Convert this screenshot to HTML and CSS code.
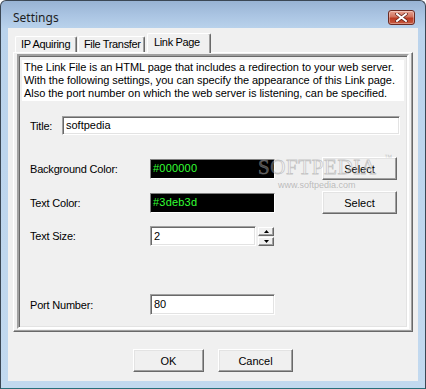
FILE: index.html
```html
<!DOCTYPE html>
<html>
<head>
<meta charset="utf-8">
<link rel="stylesheet" href="styles.css">
</head>
<body>
<div class="window">
  <div class="titlebar">
    <span class="title">Settings</span>
    <div class="close"><svg width="13" height="9" viewBox="0 0 13 9"><path d="M2 1 L11 8 M11 1 L2 8" stroke="#5a1a12" stroke-width="3.4" stroke-linecap="square"/><path d="M2 1 L11 8 M11 1 L2 8" stroke="#ffffff" stroke-width="2" stroke-linecap="square"/></svg></div>
  </div>
  <div class="client">
    <div class="tabctl">
      <div class="tabs">
        <div class="tab">IP Aquiring</div>
        <div class="tab">File Transfer</div>
        <div class="tab active">Link Page</div>
      </div>
      <div class="panel">
        <div class="frame">
          <div class="desc">The Link File is an HTML page that includes a redirection to your web server.<br>With the following settings, you can specify the appearance of this Link page.<br>Also the port number on which the web server is listening, can be specified.</div>
          <div class="row row-title">
            <span class="label lbl-title">Title:</span>
            <div class="field title-field">softpedia</div>
          </div>
          <div class="row row-bg">
            <span class="label">Background Color:</span>
            <div class="colorbox">#000000</div>
            <div class="btn select">Select</div>
          </div>
          <div class="row row-tc">
            <span class="label">Text Color:</span>
            <div class="colorbox">#3deb3d</div>
            <div class="btn select">Select</div>
          </div>
          <div class="row row-size">
            <span class="label">Text Size:</span>
            <div class="field size-field">2</div>
            <div class="spin">
              <div class="spinbtn"><svg width="5" height="3" viewBox="0 0 5 3"><path d="M2.5 0 L5 3 L0 3 Z" fill="#000"/></svg></div>
              <div class="spinbtn"><svg width="5" height="3" viewBox="0 0 5 3"><path d="M0 0 L5 0 L2.5 3 Z" fill="#000"/></svg></div>
            </div>
          </div>
          <div class="row row-port">
            <span class="label">Port Number:</span>
            <div class="field port-field">80</div>
          </div>
        </div>
      </div>
    </div>
    <div class="buttons">
      <div class="btn dlg">OK</div>
      <div class="btn dlg">Cancel</div>
    </div>
    <div class="watermark">
      <span class="wm-big">SOFTPEDIA</span><span class="wm-tm">™</span>
      <span class="wm-small">www.softpedia.com</span>
    </div>
  </div>
</div>
</body>
</html>
```

FILE: styles.css
```css
* { box-sizing: border-box; }
html, body { margin: 0; padding: 0; background: #ffffff; }
body { font-family: "Liberation Sans", Arial, sans-serif; font-size: 11px; color: #000; }

.window {
  width: 426px;
  height: 389px;
  border: 1px solid #3b4754;
  border-bottom-color: #2a6f7a;
  border-radius: 6px 6px 0 0;
  background: linear-gradient(to bottom, #98b3d3 0px, #aac4e2 14px, #bad3ec 28px, #c2d9ef 100%);
  padding: 0 7px 7px 7px;
  display: flex;
  flex-direction: column;
  position: relative;
}

.titlebar {
  height: 27px;
  display: flex;
  align-items: center;
  justify-content: space-between;
  padding: 0 2px 0 5px;
}
.title {
  font-family: "Noto Sans", "DejaVu Sans", sans-serif;
  font-size: 12px;
  color: #1e1e1e;
  margin-top: 6px;
}
.close {
  width: 27px;
  height: 15px;
  margin-top: 5px;
  margin-right: 1px;
  border: 1px solid #6b2a22;
  border-radius: 3px;
  background: linear-gradient(to bottom, #e8a493 0%, #d0715c 45%, #bb3a22 55%, #c65a40 100%);
  display: flex;
  align-items: center;
  justify-content: center;
  box-shadow: inset 0 0 0 1px rgba(255,255,255,0.35);
}

.client {
  width: 410px;
  height: 353px;
  background: #f0f0f0;
  padding: 5px 0 0 5px;
  position: relative;
}

.tabctl { width: 400px; }
.tabs {
  display: flex;
  align-items: flex-end;
  height: 19px;
  padding-left: 2px;
  position: relative;
  z-index: 2;
}
.tab {
  height: 16px;
  padding: 0 0 0 5px;
  line-height: 14px;
  letter-spacing: -0.35px;
  border: 1px solid #ffffff;
  border-right: 1px solid #696969;
  border-bottom: none;
  border-radius: 2px 2px 0 0;
  background: #f0f0f0;
  box-shadow: inset -1px 0 0 #a0a0a0;
  margin-right: 1px;
  white-space: nowrap;
  overflow: hidden;
}
.tab:nth-child(1) { width: 62px; }
.tab:nth-child(2) { width: 67px; }
.tab.active {
  height: 20px;
  width: 64px;
  margin-left: 1px;
  margin-bottom: -1px;
  line-height: 17px;
  padding-left: 6px;
}

.panel {
  height: 280px;
  border: 1px solid #ffffff;
  border-right-color: #696969;
  border-bottom-color: #696969;
  box-shadow: inset -1px -1px 0 #a0a0a0;
  padding: 1px 3px 3px 3px;
}
.frame {
  height: 275px;
  border: 2px solid;
  border-color: #a0a0a0 #ffffff #ffffff #a0a0a0;
  box-shadow: inset 1px 1px 0 #696969, inset -1px -1px 0 #e3e3e3;
  padding: 4px 3px 0 3px;
  display: flex;
  flex-direction: column;
}

.desc {
  background: #ffffff;
  height: 41px;
  padding: 1px 0 0 2px;
  line-height: 13px;
  white-space: nowrap;
  letter-spacing: -0.05px;
}

.row {
  display: flex;
  align-items: center;
  padding-left: 8px;
}
.label { width: 120px; flex: none; letter-spacing: -0.2px; }
.lbl-title { width: 32px; }

.field {
  height: 20px;
  background: #ffffff;
  border: 1px solid;
  border-color: #a0a0a0 #ffffff #ffffff #a0a0a0;
  box-shadow: inset 1px 1px 0 #696969, inset -1px -1px 0 #e3e3e3;
  padding: 0 3px;
  line-height: 18px;
}
.row-title { margin-top: 15px; }
.title-field { width: 338px; height: 19px; line-height: 17px; }

.row-bg { margin-top: 22px; }
.row-tc { margin-top: 11px; }
.colorbox {
  width: 125px;
  height: 20px;
  background: #000000;
  color: #33ff33;
  border: 1px solid;
  border-color: #808080 #ffffff #ffffff #808080;
  line-height: 17px;
  padding-left: 2px;
  letter-spacing: 0.2px;
}
.btn {
  background: #f0f0f0;
  border: 1px solid;
  border-color: #ffffff #696969 #696969 #ffffff;
  box-shadow: inset -1px -1px 0 #a0a0a0, inset 1px 1px 0 #e3e3e3;
  display: flex;
  align-items: center;
  justify-content: center;
}
.select {
  width: 75px;
  height: 23px;
  margin-left: 47px;
}

.row-size { margin-top: 12px; }
.size-field { width: 106px; }
.spin {
  margin-left: 2px;
  display: flex;
  flex-direction: column;
  gap: 1px;
}
.spinbtn {
  width: 16px;
  height: 9px;
  background: #f0f0f0;
  border: 1px solid;
  border-color: #ffffff #696969 #696969 #ffffff;
  box-shadow: inset -1px -1px 0 #a0a0a0;
  display: flex;
  align-items: center;
  justify-content: center;
}

.row-port { margin-top: 48px; }
.port-field { width: 125px; height: 21px; }

.buttons {
  display: flex;
  gap: 14px;
  padding-left: 120px;
  margin-top: 17px;
}
.dlg { width: 71px; height: 23px; }
.dlg:nth-child(2) { width: 75px; }

.watermark {
  position: absolute;
  left: 250px;
  top: 127px;
  width: 150px;
  height: 40px;
  pointer-events: none;
}
.wm-big {
  position: absolute;
  left: 0;
  top: 0;
  font-family: "Liberation Serif", serif;
  font-size: 21px;
  line-height: 24px;
  letter-spacing: 0.6px;
  color: rgba(255,255,255,0.3);
  -webkit-text-stroke: 0.8px rgba(140,140,140,0.45);
}
.wm-tm {
  position: absolute;
  left: 126px;
  top: -2px;
  font-size: 8px;
  color: rgba(160,160,160,0.5);
}
.wm-small {
  position: absolute;
  left: 20px;
  top: 25px;
  font-size: 9px;
  line-height: 10px;
  color: rgba(150,150,150,0.6);
}
```
